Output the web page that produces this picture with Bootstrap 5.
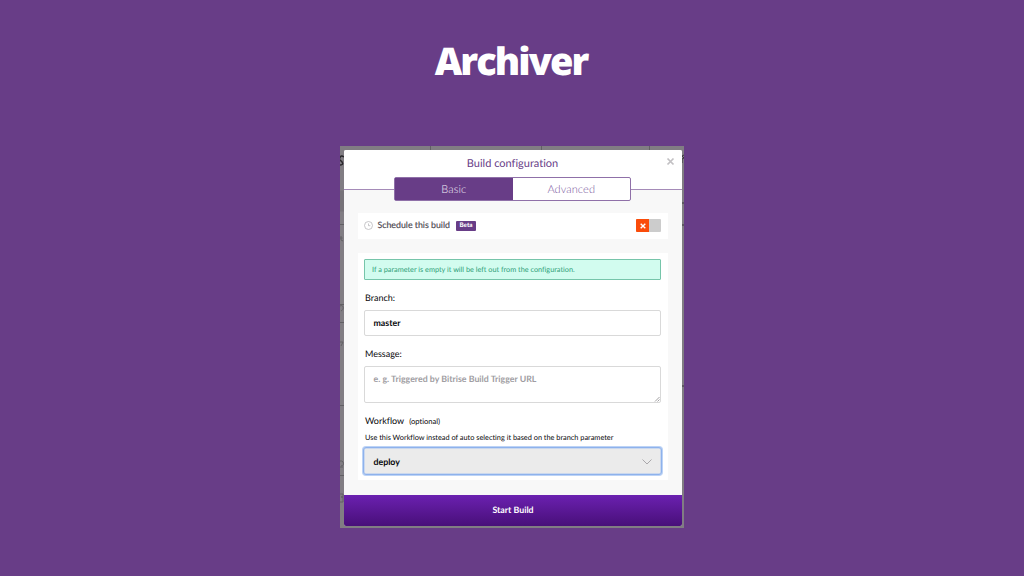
<!DOCTYPE html>
<html lang="en">
<head>
  <meta charset="UTF-8" />
  <meta name="viewport" content="width=device-width, initial-scale=1" />
  <title>Archiver</title>
  <link href="https://cdn.jsdelivr.net/npm/bootstrap@5.3.3/dist/css/bootstrap.min.css" rel="stylesheet" />
  <style>
    body {
      background-color: #683d87;
      color: #08070a;
      font-family: Lato, sans-serif;
      font-size: 9px;
      line-height: 12px;
      height: 576px;
      overflow: hidden;
      text-rendering: geometricPrecision;
      font-variant-ligatures: none;
    }

    .slide-title {
      font-family: "Open Sans", sans-serif;
      font-weight: 800;
      font-size: 38px;
      line-height: 50px;
      letter-spacing: -1.95px;
      margin: 36px 0 60px;
      padding-right: 2px;
    }

    /* dimmed page behind the dialog */
    .page-behind {
      width: 344px;
      height: 382px;
      padding: 4px 2px 2px 4px;
      background-color: #817d83;
      overflow: hidden;
    }

    .behind-art {
      inset: 0;
    }

    .dialog-box {
      width: 338px;
      height: 376px;
      background-color: #f8f8f8;
      border-radius: 2px;
      overflow: hidden;
    }

    .dialog-head {
      height: 40px;
      background-color: #fff;
      border-bottom: 1px solid #a58bb8;
      color: #683d87;
    }

    .dialog-title {
      font-size: 11px;
      line-height: 14px;
      padding: 7px 1px 0 0;
    }

    .close-x {
      top: 7px;
      right: 7px;
    }

    .tab-switch {
      width: 237px;
      height: 24px;
      margin: -13px 0 0 50px;
      border: 1px solid #8f70a8;
      border-radius: 2px;
      background-color: #fff;
      font-size: 11px;
      font-weight: 300;
      color: #75519a;
      letter-spacing: 0.1px;
    }

    .tab-switch > div {
      padding-top: 1px;
    }

    .tab-switch .chosen {
      background-color: #683d87;
      color: #f0e9f5;
    }

    .panel {
      margin: 0 14px;
      background-color: #fff;
    }

    .schedule-row {
      height: 26px;
      margin-top: 12px;
      padding: 0 7px 1px 6px;
    }

    .schedule-text {
      font-size: 8.8px;
      color: #4a454e;
      -webkit-text-stroke: 0.15px #4a454e;
      width: 73px;
      margin: 0 6px 0 4px;
      padding: 0 0 1px 0.5px;
      white-space: nowrap;
    }

    .beta-tag {
      width: 20px;
      height: 10px;
      line-height: 9px;
      font-size: 6.2px;
      font-weight: 900;
      color: #fff;
      background-color: #683d87;
      border-radius: 1px;
    }

    .toggle {
      width: 25px;
      height: 13px;
      border-radius: 1px;
      background-color: #ccc;
      overflow: hidden;
    }

    .toggle .off-side {
      width: 13px;
      background-color: #fa4c0a;
    }

    .form-panel {
      height: 227px;
      margin-top: 14px;
      padding: 6px 7px 0 6px;
    }

    .note {
      height: 21px;
      padding: 0 7px;
      border: 1px solid #76c5aa;
      border-radius: 1px;
      background-color: #d2fcef;
      color: #2f9f78;
      font-size: 7.3px;
    }

    .field-label {
      height: 12px;
      margin: 12px 0 6px;
      padding-left: 1px;
      font-size: 9px;
    }

    .field-box {
      height: 26px;
      border: 1px solid #d9d9d9;
      border-radius: 2px;
      padding: 0 8.5px;
      font-size: 8.8px;
      font-weight: 700;
    }

    .message-box {
      height: 37px;
      padding-top: 6px;
      color: #a09da2;
    }

    .grip {
      right: 0;
      bottom: 0;
    }

    .optional {
      font-size: 7.6px;
      margin-left: 5px;
    }

    .help-line {
      font-size: 7.35px;
      line-height: 10px;
      margin: 0 0 4px;
      padding-left: 1px;
      white-space: nowrap;
    }

    .select-box {
      height: 28px;
      margin: 0 -1px;
      border-color: #8eb2ec;
      box-shadow: inset 0 0 0 0.5px #a9c5f2, 0 0 0 1px #bcd3f6;
      border-radius: 3px;
      background-color: #ebebeb;
      padding: 1px 9.5px 0;
    }

    .start-button {
      height: 31px;
      margin-top: 15px;
      padding-bottom: 1px;
      color: #fff;
      background-image: linear-gradient(#6b21b0, #480f79);
      font-size: 8.8px;
      font-weight: 700;
    }
  </style>
</head>
<body>

  <h1 class="slide-title text-center text-white">Archiver</h1>

  <!-- Page behind -->
  <main class="page-behind position-relative mx-auto">
    <svg class="behind-art position-absolute" width="344" height="382" viewBox="0 0 344 382" fill="none" stroke="#626064" stroke-width="1">
      <path d="M90.500 0v4M201.500 0v4M309.500 0v4M0 78.500h4M0 158.500h4M0 176.500h4M0 259.500h4M0 329.500h4" />
      <path d="M0 92h2.500M1 90v4l2 1M0 160c3-2 5 3 1 5M0 196h3l-2 4M0 315c4-1 5 5 1 5M0 321h3M0 348h3v3H1h2v5H0" />
      <path d="M4 11C0 8-1 13 0 14c3 2 4 5 0 5" stroke="#29272b" stroke-width="1.500" />
      <path d="M344 9l-2 1 2 2-2 1v4M342 57h2M342 79h2M342 240h2" stroke="#39363b" />
      <path d="M0 44.500h4v21H0" fill="#777379" stroke="none" />
    </svg>

    <!-- Dialog -->
    <section class="dialog-box position-relative">
      <header class="dialog-head text-center">
        <div class="dialog-title">Build configuration</div>
        <svg class="close-x position-absolute" width="9" height="9" viewBox="0 0 9 9" stroke="#c2c0c3" stroke-width="1.700">
          <path d="M1.500 1.500l6 6M7.500 1.500l-6 6" />
        </svg>
      </header>

      <div class="tab-switch position-relative d-flex">
        <div class="chosen w-50 d-flex align-items-center justify-content-center">Basic</div>
        <div class="w-50 d-flex align-items-center justify-content-center">Advanced</div>
      </div>

      <div class="panel schedule-row d-flex align-items-center">
        <svg width="9" height="9" viewBox="0 0 9 9" fill="none" stroke="#b9b7bb" stroke-width="0.800">
          <circle cx="4.500" cy="4.500" r="4" />
          <path d="M4.500 2.500v2.200h1.800" />
        </svg>
        <span class="schedule-text">Schedule this build</span>
        <span class="beta-tag text-center">Beta</span>
        <div class="toggle d-flex ms-auto">
          <div class="off-side d-flex align-items-center justify-content-center">
            <svg width="6" height="6" viewBox="0 0 6 6" stroke="#fff" stroke-width="1.400">
              <path d="M.7 .7l4.600 4.600M5.300 .7L.7 5.300" />
            </svg>
          </div>
        </div>
      </div>

      <div class="panel form-panel">
        <div class="note d-flex align-items-center">If a parameter is empty it will be left out from the configuration.</div>

        <div class="field-label">Branch:</div>
        <div class="field-box d-flex align-items-center">master</div>

        <div class="field-label">Message:</div>
        <div class="field-box message-box position-relative">
          e. g. Triggered by Bitrise Build Trigger URL
          <svg class="grip position-absolute" width="6" height="6" viewBox="0 0 6 6" stroke="#8a888b" stroke-width="0.800">
            <path d="M1 5.500L5.500 1M3.500 5.500l2-2" />
          </svg>
        </div>

        <div class="field-label d-flex">Workflow <span class="optional">(optional)</span></div>
        <div class="help-line">Use this Workflow instead of auto selecting it based on the branch parameter</div>
        <div class="field-box select-box d-flex align-items-center">
          deploy
          <svg class="ms-auto" width="10" height="6" viewBox="0 0 10 6" fill="none" stroke="#aaa8ab" stroke-width="1">
            <path d="M.5 .5L5 5 9.500 .5" />
          </svg>
        </div>
      </div>

      <div class="start-button d-flex align-items-center justify-content-center">Start Build</div>
    </section>
  </main>

  <script src="https://cdn.jsdelivr.net/npm/bootstrap@5.3.3/dist/js/bootstrap.bundle.min.js"></script>
</body>
</html>
